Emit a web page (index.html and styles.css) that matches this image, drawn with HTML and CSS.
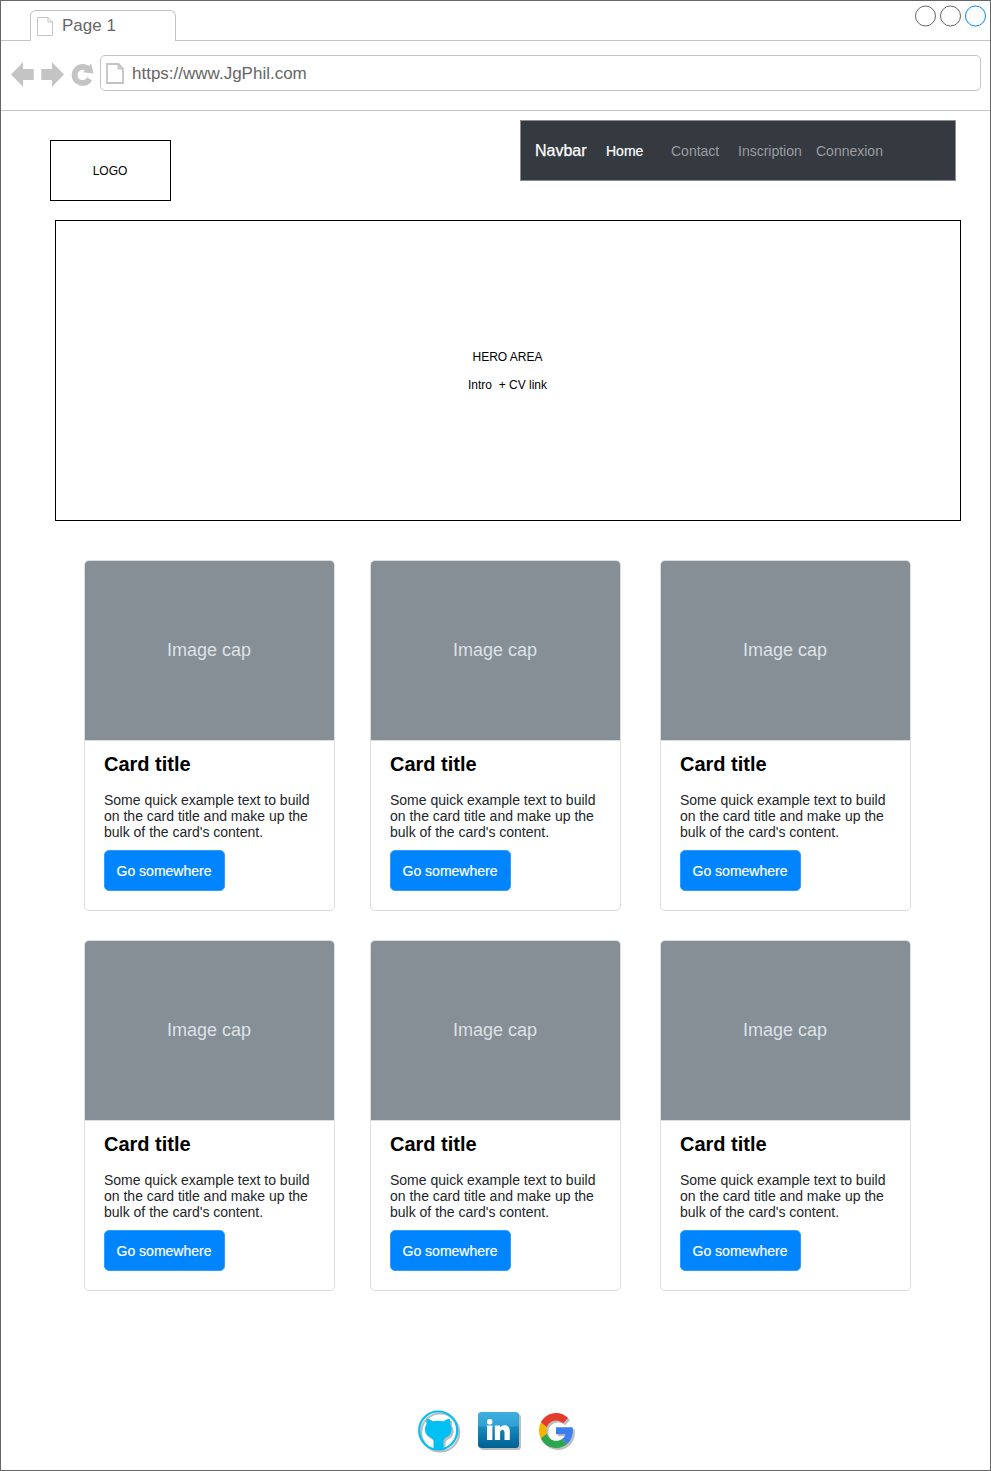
FILE: index.html
```html
<!DOCTYPE html>
<html lang="en">
<head>
<meta charset="utf-8">
<title>Page 1</title>
<link rel="stylesheet" href="styles.css">
</head>
<body>
<div class="browser">
  <header class="tabs">
    <div class="tab">
      <svg class="tab-icon" width="16" height="19" viewBox="0 0 16 19"><path d="M.5.5H11L15.500 5V18.500H.5ZM11 .5V5H15.500" fill="none" stroke="#c4c4c4"/></svg>
      <span>Page 1</span>
    </div>
    <div class="tab-line"></div>
    <svg class="window-controls" width="76" height="24" viewBox="0 0 76 24" fill="none"><circle cx="11.500" cy="12" r="10" stroke="#666"/><circle cx="36.500" cy="12" r="10" stroke="#666"/><circle cx="61.500" cy="12" r="10" stroke="#008cff"/></svg>
  </header>
  <div class="toolbar">
    <svg class="controls" width="84" height="26" viewBox="0 0 84 26" fill="#c4c4c4"><path d="M0 13.500L12 1.300V8H22.700V19H12V25.700ZM53 13.500L41 1.300V8H30.300V19H41V25.700Z"/><path d="M77.600 8.700A8 8 0 1 0 78.600 17.800" fill="none" stroke="#c4c4c4" stroke-width="5.800"/><path d="M80 2.600L82.600 12.400L72 11.200Z"/></svg>
    <div class="address">
      <svg width="18" height="21" viewBox="0 0 18 21"><path d="M1 1H12.500L17 5.500V20H1ZM12.500 1V5.500H17" fill="none" stroke="#c4c4c4" stroke-width="1.800"/></svg>
      <span>https://www.JgPhil.com</span>
    </div>
  </div>
  <main class="page">
    <div class="top">
      <div class="logo"><span>LOGO</span></div>
      <nav class="navbar">
        <b class="brand">Navbar</b><a class="home">Home</a><a class="contact">Contact</a><a class="inscription">Inscription</a><a>Connexion</a>
      </nav>
    </div>
    <section class="hero"><p>HERO AREA</p><p>Intro&nbsp; + CV link</p></section>
    <section class="cards">
      <article class="card"><div class="cap">Image cap</div><div class="body"><h2>Card title</h2><p>Some quick example text to build on the card title and make up the bulk of the card's content.</p><a class="button">Go somewhere</a></div></article>
      <article class="card"><div class="cap">Image cap</div><div class="body"><h2>Card title</h2><p>Some quick example text to build on the card title and make up the bulk of the card's content.</p><a class="button">Go somewhere</a></div></article>
      <article class="card"><div class="cap">Image cap</div><div class="body"><h2>Card title</h2><p>Some quick example text to build on the card title and make up the bulk of the card's content.</p><a class="button">Go somewhere</a></div></article>
      <article class="card"><div class="cap">Image cap</div><div class="body"><h2>Card title</h2><p>Some quick example text to build on the card title and make up the bulk of the card's content.</p><a class="button">Go somewhere</a></div></article>
      <article class="card"><div class="cap">Image cap</div><div class="body"><h2>Card title</h2><p>Some quick example text to build on the card title and make up the bulk of the card's content.</p><a class="button">Go somewhere</a></div></article>
      <article class="card"><div class="cap">Image cap</div><div class="body"><h2>Card title</h2><p>Some quick example text to build on the card title and make up the bulk of the card's content.</p><a class="button">Go somewhere</a></div></article>
    </section>
    <footer class="social">
      <svg class="github" width="40" height="40" viewBox="0 0 40 40"><circle cx="20.200" cy="20.500" r="19" fill="none" stroke="#03c0f2" stroke-width="2.200"/><path d="M15.500 39V31C14.800 28.500 13 27.800 11.500 27C8.500 25.500 7 23 7 19.500C7 17 7.500 15.500 8.600 14C8 12 8.200 10 9 8.700C11 8.700 13 10 14.800 11.200Q20.300 10.200 25.800 11.200C27.600 10 29.600 8.700 31.600 8.700C32.400 10 32.600 12 32 14C33.100 15.500 33.600 17 33.600 19.500C33.600 23 32 25.500 29 27C27.500 27.800 26.200 28.500 25.500 31V39Z" fill="#03c0f2"/></svg>
      <svg class="linkedin" width="41" height="36" viewBox="0 0 41 36"><defs><linearGradient id="blue" x1="0" y1="0" x2="0" y2="1"><stop stop-color="#36a9df"/><stop offset=".38" stop-color="#2399cf"/><stop offset=".42" stop-color="#158bbd"/><stop offset="1" stop-color="#005f93"/></linearGradient></defs><rect width="41" height="36" rx="3.500" fill="url(#blue)"/><path d="M0 14Q20 20 41 13V4Q41 0 37 0H4Q0 0 0 4Z" fill="#5bbce8" opacity=".25"/><circle cx="11.700" cy="9.700" r="2.800" fill="#fff"/><path d="M9 13.500H14.400V28H9ZM16.800 13.500H22V15.500C25 11.800 31.800 12.800 31.800 19V28H26.500V20.500C26.500 16.800 22.100 16.800 22.100 20.500V28H16.800Z" fill="#fff"/></svg>
      <svg class="google" width="34" height="35" viewBox="2 2 44 44" preserveAspectRatio="none"><path fill="#e53b2c" d="M24 11.500c3.500 0 6.500 1.200 9 3.500l6.700-6.700C35.600 4.400 30.200 2 24 2 15.400 2 8 6.900 4.300 14l7.800 6C14 15 18.500 11.500 24 11.500Z"/><path fill="#f5b400" d="M11.500 24c0-1.500.2-2.800.7-4l-7.900-6C1.200 20.500 1.200 27.500 4.300 34l7.900-6c-.5-1.300-.7-2.600-.7-4Z"/><path fill="#2da44e" d="M24 46c6 0 11-2 14.600-5.300l-7.500-5.800C29 36.300 26.700 37 24 37c-5.600 0-10-4-11.800-9l-7.900 6C8 41.200 15.400 46 24 46Z"/><path fill="#3d7eed" d="M45.500 20H24v8.700h12.300c-.6 2.700-2.200 4.800-5.200 6.200l7.500 5.800C44 36 46.700 28.500 45.500 20Z"/></svg>
    </footer>
  </main>
</div>
</body>
</html>
```

FILE: styles.css
```css
* { box-sizing: border-box; }
body { margin: 0; background: #fff; font-family: "Liberation Sans", Arial, sans-serif; color: #000; }
h2, p { margin: 0; }
svg { display: block; flex: none; }
.browser { width: 991px; height: 1471px; border: 1px solid #666; overflow: hidden; }
.tabs { display: flex; height: 40px; align-items: flex-end; position: relative; }
.tabs::before { content: ""; width: 29px; height: 1px; background: #c4c4c4; }
.tab { width: 146px; height: 31px; border: 1px solid #c4c4c4; border-bottom: 0; border-radius: 6px 6px 0 0; display: flex; padding: 6px 0 0 6px; gap: 9px; font-size: 17px; line-height: 18px; color: #666; }
.tab-line { flex: 1; height: 1px; background: #c4c4c4; }
.window-controls { position: absolute; right: 0; top: 3px; }
.toolbar { height: 70px; border-bottom: 1px solid #c4c4c4; padding: 14px 9px 0 10px; display: flex; align-items: flex-start; gap: 5px; }
.controls { margin-top: 6px; }
.address { flex: 1; height: 36px; border: 1px solid #c4c4c4; border-radius: 5px; padding: 0 5px; display: flex; align-items: center; gap: 8px; font-size: 17px; line-height: 20px; color: #666; }
.address span { padding-top: 1px; }
.page { display: flex; flex-direction: column; }
.top { display: flex; justify-content: space-between; padding: 9px 34px 0 49px; height: 109px; }
.logo { width: 121px; height: 61px; margin-top: 20px; border: 1px solid #000; display: flex; align-items: center; justify-content: center; padding-right: 1px; font-size: 12px; }
.navbar { width: 436px; height: 61px; border: 1px solid #868e96; background: #343a40; padding-left: 14px; display: flex; align-items: center; font-size: 14px; color: #999da0; }
.brand { width: 71px; font-size: 16px; font-weight: 400; color: #fff; -webkit-text-stroke: .25px #fff; }
.home { width: 65px; color: #fff; -webkit-text-stroke: .2px #fff; }
.contact { width: 67px; }
.inscription { width: 78px; }
.hero { width: 906px; height: 301px; margin-left: 54px; border: 1px solid #000; display: flex; flex-direction: column; align-items: center; justify-content: center; padding-right: 1px; gap: 14px; font-size: 12px; line-height: 14px; }
.cards { display: grid; grid-template-columns: 286px 290px 251px; row-gap: 29px; padding: 39px 0 0 83px; }
.card { width: 251px; height: 351px; border: 1px solid #ddd; border-radius: 5px; overflow: hidden; }
.cap { height: 179px; padding-right: 1px; background: #868e96; color: #dee2e6; display: flex; align-items: center; justify-content: center; font-size: 18px; }
.body { border-top: 1px solid #ddd; padding: 11px 19px 0; }
.card h2 { font-size: 20px; line-height: 24px; }
.card p { width: 212px; margin-top: 16px; font-size: 14px; line-height: 16px; color: #212529; }
.button { display: flex; width: 121px; height: 41px; margin-top: 10px; padding-right: 1px; border: 1px solid #339dff; border-radius: 5px; background: #0085ff; color: #fff; align-items: center; justify-content: center; font-size: 14px; -webkit-text-stroke: .2px #fff; }
.social { display: flex; align-items: flex-start; padding: 119px 0 0 417px; }
.social svg { filter: drop-shadow(2px 2px 0 #bdbdbd); overflow: visible; }
.linkedin { margin: 2px 0 0 20px; }
.google { margin: 3px 0 0 20px; }
```
